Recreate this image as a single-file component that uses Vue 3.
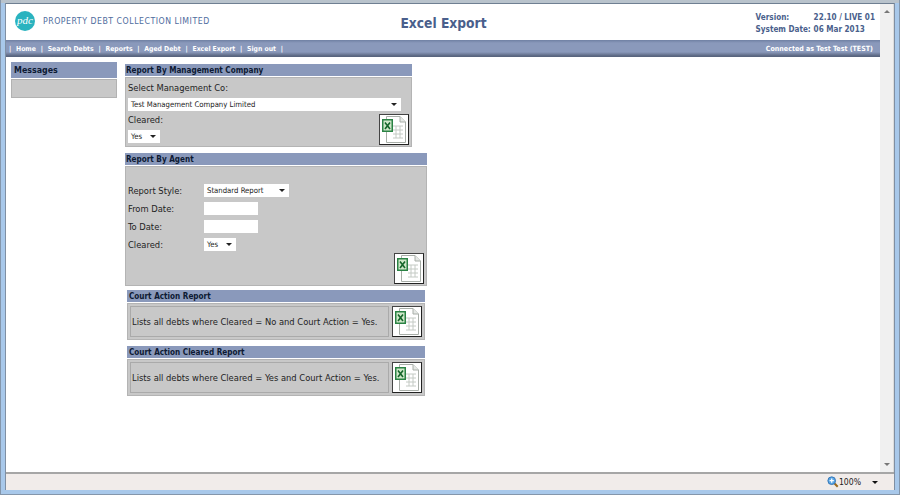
<script setup>
const menu = ['Home', 'Search Debts', 'Reports', 'Aged Debt', 'Excel Export', 'Sign out']
</script>

<template>
  <div class="window">
    <div class="inner">
      <div class="viewport">
        <main class="page">
          <header class="head">
            <div class="brand">
              <div class="logo">pdc</div>
              <span class="company">PROPERTY DEBT COLLECTION LIMITED</span>
            </div>
            <h1 class="title">Excel Export</h1>
            <div class="meta">
              <div class="meta-row"><span class="meta-key">Version:</span><span class="meta-val">22.10 / LIVE 01</span></div>
              <div class="meta-row"><span class="meta-key">System Date:</span><span class="meta-val">06 Mar 2013</span></div>
            </div>
          </header>
          <nav class="nav">
            <div class="menu">
              <span class="sep">|</span>
              <template v-for="m in menu" :key="m">
                <span class="item">{{ m }}</span><span class="sep">|</span>
              </template>
            </div>
            <span class="conn">Connected as Test Test (TEST)</span>
          </nav>
          <div class="content">
            <aside class="side">
              <div class="bar bar-side">Messages</div>
              <div class="side-body"></div>
            </aside>
            <div class="reports">
              <section class="card w-mgmt">
                <div class="bar">Report By Management Company</div>
                <div class="body body-mgmt">
                  <div class="label l1">Select Management Co:</div>
                  <div class="select s-wide"><span>Test Management Company Limited</span><i class="arrow"></i></div>
                  <div class="lower">
                    <div>
                      <div class="label l2">Cleared:</div>
                      <div class="select s-yes"><span>Yes</span><i class="arrow"></i></div>
                    </div>
                    <button class="xl xl-mgmt" aria-label="Export">
                      <svg width="26" height="27" viewBox="0 0 26 27">
                        <path d="M5.5 .5H19L24.5 6V26.5H5.5Z" fill="#fff" stroke="#a8aea8"/>
                        <path d="M19 .5V6H24.5" fill="#e6e9e6" stroke="#a8aea8"/>
                        <path d="M12 10H22M12 14H22M12 18H22M12 22H22M15 10V22M19 10V22" stroke="#c4cac4" fill="none"/>
                        <rect x="1" y="3" width="11" height="13" fill="#2a8344"/>
                        <rect x="2.5" y="4.5" width="8" height="10" fill="#cfe8c9"/>
                        <path d="M4 6.5L9 13M9 6.5L4 13" stroke="#14652a" stroke-width="1.6"/>
                      </svg>
                    </button>
                  </div>
                </div>
              </section>

              <section class="card w-agent">
                <div class="bar">Report By Agent</div>
                <div class="body body-agent">
                  <div class="form">
                    <div class="label">Report Style:</div>
                    <div class="select s-style"><span>Standard Report</span><i class="arrow"></i></div>
                    <div class="label">From Date:</div>
                    <div class="input"></div>
                    <div class="label">To Date:</div>
                    <div class="input"></div>
                    <div class="label">Cleared:</div>
                    <div class="select s-yes"><span>Yes</span><i class="arrow"></i></div>
                  </div>
                  <div class="agent-foot">
                    <button class="xl" aria-label="Export">
                      <svg width="26" height="27" viewBox="0 0 26 27">
                        <path d="M5.5 .5H19L24.5 6V26.5H5.5Z" fill="#fff" stroke="#a8aea8"/>
                        <path d="M19 .5V6H24.5" fill="#e6e9e6" stroke="#a8aea8"/>
                        <path d="M12 10H22M12 14H22M12 18H22M12 22H22M15 10V22M19 10V22" stroke="#c4cac4" fill="none"/>
                        <rect x="1" y="3" width="11" height="13" fill="#2a8344"/>
                        <rect x="2.5" y="4.5" width="8" height="10" fill="#cfe8c9"/>
                        <path d="M4 6.5L9 13M9 6.5L4 13" stroke="#14652a" stroke-width="1.6"/>
                      </svg>
                    </button>
                  </div>
                </div>
              </section>

              <section class="card w-court">
                <div class="bar bar-court">Court Action Report</div>
                <div class="body body-court">
                  <div class="note">Lists all debts where Cleared = No and Court Action = Yes.</div>
                  <button class="xl" aria-label="Export">
                    <svg width="26" height="27" viewBox="0 0 26 27">
                      <path d="M5.5 .5H19L24.5 6V26.5H5.5Z" fill="#fff" stroke="#a8aea8"/>
                      <path d="M19 .5V6H24.5" fill="#e6e9e6" stroke="#a8aea8"/>
                      <path d="M12 10H22M12 14H22M12 18H22M12 22H22M15 10V22M19 10V22" stroke="#c4cac4" fill="none"/>
                      <rect x="1" y="3" width="11" height="13" fill="#2a8344"/>
                      <rect x="2.5" y="4.5" width="8" height="10" fill="#cfe8c9"/>
                      <path d="M4 6.5L9 13M9 6.5L4 13" stroke="#14652a" stroke-width="1.6"/>
                    </svg>
                  </button>
                </div>
              </section>

              <section class="card w-court">
                <div class="bar bar-court">Court Action Cleared Report</div>
                <div class="body body-court">
                  <div class="note">Lists all debts where Cleared = Yes and Court Action = Yes.</div>
                  <button class="xl" aria-label="Export">
                    <svg width="26" height="27" viewBox="0 0 26 27">
                      <path d="M5.5 .5H19L24.5 6V26.5H5.5Z" fill="#fff" stroke="#a8aea8"/>
                      <path d="M19 .5V6H24.5" fill="#e6e9e6" stroke="#a8aea8"/>
                      <path d="M12 10H22M12 14H22M12 18H22M12 22H22M15 10V22M19 10V22" stroke="#c4cac4" fill="none"/>
                      <rect x="1" y="3" width="11" height="13" fill="#2a8344"/>
                      <rect x="2.5" y="4.5" width="8" height="10" fill="#cfe8c9"/>
                      <path d="M4 6.5L9 13M9 6.5L4 13" stroke="#14652a" stroke-width="1.6"/>
                    </svg>
                  </button>
                </div>
              </section>
            </div>
          </div>
        </main>
        <div class="scrollbar">
          <span class="sb-up"></span>
          <span class="sb-down"></span>
        </div>
      </div>
      <footer class="status">
        <svg class="zoom-ic" width="12" height="12" viewBox="0 0 14 14">
          <path d="M8.5 8.5L12.5 12.5" stroke="#9a6a1e" stroke-width="2.4"/>
          <circle cx="5.5" cy="5.5" r="4.5" fill="#5ba7e6" stroke="#2f6fb0"/>
          <path d="M3 5.5H8M5.5 3V8" stroke="#fff" stroke-width="1.5"/>
        </svg>
        <span class="pct">100%</span>
        <i class="arrow status-arrow"></i>
      </footer>
    </div>
  </div>
</template>

<style>
html, body { margin: 0; padding: 0; background: #a9c8e4; }
</style>

<style scoped>
.window {
  --f: "DejaVu Sans Condensed", "DejaVu Sans", sans-serif;
  width: 900px;
  height: 495px;
  box-sizing: border-box;
  padding: 2px 4px 5px;
  background: linear-gradient(#b9c3cc 0, #b9c3cc 3px, #a8c8ea 3px);
  border: 1px solid #8496ab;
  border-top: 0;
  overflow: hidden;
  font-family: var(--f);
  font-stretch: condensed;
}
.inner {
  height: 100%;
  display: flex;
  flex-direction: column;
  margin-top: 1px;
  border-left: 1px solid #7f8fa3;
  border-right: 1px solid #7f8fa3;
}
.viewport {
  flex: 1;
  min-height: 0;
  display: flex;
  background: #fff;
  border-top: 1px solid #6f7f92;
}
.page { flex: 1; min-width: 0; }
.scrollbar {
  width: 14px;
  background: #f0f0f0;
  display: flex;
  flex-direction: column;
  justify-content: space-between;
  align-items: center;
  padding: 6px 0;
  box-sizing: border-box;
  border-right: 1px solid #dcdcdc;
}
.sb-up, .sb-down { width: 0; height: 0; border-left: 3px solid transparent; border-right: 3px solid transparent; }
.sb-up { border-bottom: 3px solid #777; }
.sb-down { border-top: 3px solid #777; }

.head {
  height: 36px;
  display: grid;
  grid-template-columns: 1fr 1fr 1fr;
  align-items: start;
  padding-right: 5px;
}
.brand { display: flex; align-items: center; padding: 7px 0 0 9px; gap: 8px; }
.logo {
  width: 20px;
  height: 20px;
  border-radius: 50%;
  background: #2ab3bf;
  color: #fff;
  font: italic 11px/19px "Liberation Serif", serif;
  text-align: center;
}
.company { font: 8.7px var(--f); font-stretch: condensed; color: #4f6d9e; letter-spacing: .52px; white-space: nowrap; }
.title { margin: 10px 0 0; font: bold 13.7px/18px var(--f); font-stretch: condensed; color: #4a5f8c; text-align: center; white-space: nowrap; transform: translateX(3px); }
.meta { margin-top: 7px; font: bold 8.1px/12px var(--f); font-stretch: condensed; color: #4a5f8c; justify-self: end; }
.meta-row { display: flex; }
.meta-key { width: 58px; }

.nav {
  height: 17px;
  box-sizing: border-box;
  background: linear-gradient(#6f80a3 0, #8a99bb 3px, #8a99bb 12px, #59657f 16px);
  color: #fff;
  display: flex;
  align-items: center;
  justify-content: space-between;
  padding: 0 7px 0 3px;
  font: bold 6.8px var(--f);
  font-stretch: condensed;
}
.menu { display: flex; gap: 4.8px; white-space: nowrap; }
.conn { white-space: nowrap; font-size: 7.05px; }

.content { display: flex; padding: 5px 0 0 5px; gap: 8px; align-items: flex-start; }
.side { width: 106px; flex: none; }
.bar {
  height: 12px;
  background: #8a99bb;
  font: bold 8.1px/12px var(--f);
  font-stretch: condensed;
  color: #0d1a33;
  padding-left: 1px;
  margin-bottom: 1px;
  white-space: nowrap;
}
.bar-side { height: 16px; line-height: 16px; padding-left: 3px; font-size: 8.8px; }
.side-body { height: 19px; box-sizing: border-box; background: #c8c8c8; border: 1px solid #b2b2b2; }

.reports { width: 303px; display: flex; flex-direction: column; margin-top: 2px; }
.card { box-sizing: border-box; }
.w-mgmt { width: 287px; margin-bottom: 6px; }
.w-agent { width: 302px; margin-bottom: 4px; }
.w-court { width: 298px; margin-left: 2px; margin-bottom: 6px; }
.bar-court { padding-left: 2px; }

.body { background: #c8c8c8; border: 1px solid #b4b4b4; box-sizing: border-box; }
.body-mgmt { height: 70px; padding: 3px 2px 0 2px; }
.label { font: 9.3px/14px var(--f); font-stretch: condensed; color: #222; white-space: nowrap; }
.l1 { margin-bottom: 3px; }
.l2 { margin-bottom: 3px; }
.select {
  box-sizing: border-box;
  background: #fff;
  height: 13px;
  display: flex;
  align-items: center;
  justify-content: space-between;
  padding: 0 4px 0 3px;
  font: 7.7px var(--f);
  font-stretch: condensed;
  color: #222;
  white-space: nowrap;
}
.s-wide { width: 273px; }
.s-yes { width: 32px; }
.s-style { width: 85px; }
.arrow { display: block; width: 0; height: 0; border-left: 3px solid transparent; border-right: 3px solid transparent; border-top: 3px solid #222; }
.lower { display: flex; justify-content: space-between; align-items: flex-start; margin-top: 2px; }
.xl {
  width: 30px;
  height: 31px;
  padding: 0;
  background: #fff;
  border: 1px solid #444;
  border-right-color: #222;
  border-bottom-color: #222;
  display: flex;
  align-items: center;
  justify-content: center;
  box-sizing: border-box;
  flex: none;
}
.xl-mgmt { margin-top: 1px; }

.body-agent { height: 120px; padding: 17px 2px 1px; display: flex; flex-direction: column; justify-content: space-between; }
.form { display: grid; grid-template-columns: 76px auto; justify-content: start; align-items: center; row-gap: 5px; }
.form .label { line-height: 13px; }
.input { width: 54px; height: 13px; background: #fff; }
.agent-foot { display: flex; justify-content: flex-end; }

.body-court {
  height: 37px;
  display: flex;
  align-items: center;
  justify-content: space-between;
  padding: 2px;
}
.note {
  flex: 1;
  min-width: 0;
  height: 31px;
  box-sizing: border-box;
  margin-right: 3px;
  border: 1px solid #aaa;
  display: flex;
  align-items: center;
  padding-left: 1px;
  font: 9.3px var(--f);
  font-stretch: condensed;
  color: #222;
  white-space: nowrap;
}

.status {
  height: 18px;
  flex: none;
  box-sizing: border-box;
  background: #f1ecea;
  border-top: 2px solid #a6a6a6;
  display: flex;
  align-items: center;
  justify-content: flex-end;
  padding-right: 16px;
  font: 8.6px var(--f);
  font-stretch: condensed;
  color: #222;
}
.zoom-ic { margin-right: 0; }
.status-arrow { margin-left: 11px; border-top-color: #111; }
</style>
